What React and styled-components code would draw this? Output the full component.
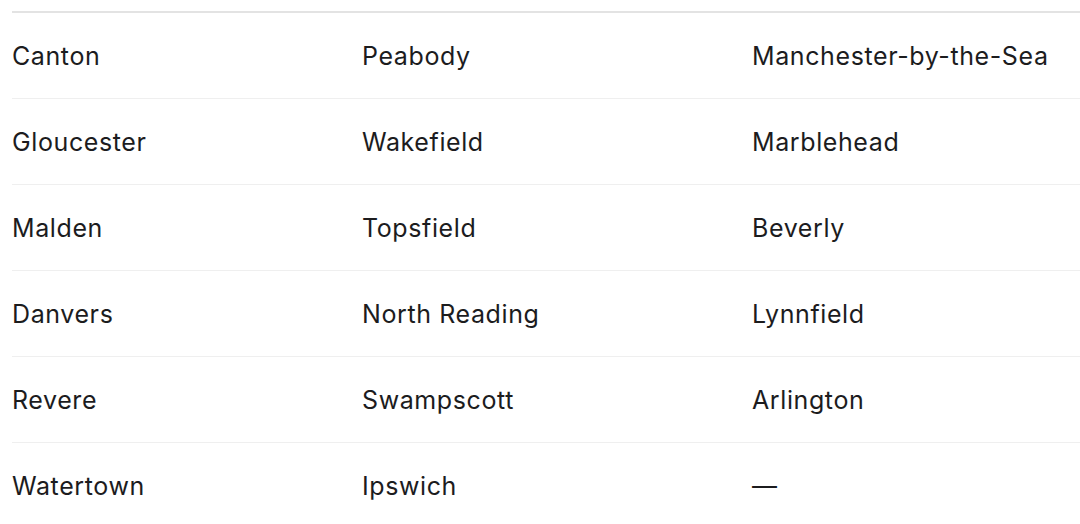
import React from "react";
import styled, { createGlobalStyle } from "styled-components";

const GlobalStyle = createGlobalStyle`
  body {
    margin: 0;
    background: #ffffff;
    font-family: Inter, "Noto Sans", sans-serif;
    -webkit-font-smoothing: antialiased;
  }
`;

const Wrapper = styled.div`
  padding: 11px 0 0 12px;
  overflow: hidden;
`;

const Table = styled.div`
  border-top: 2px solid #e3e3e3;
  width: 1200px;
`;

const Row = styled.div`
  display: grid;
  grid-template-columns: 350px 390px 1fr;
  align-items: center;
  height: 85px;
  border-bottom: 1px solid ${(p) => (p.$last ? "transparent" : "#efefef")};
`;

const Cell = styled.div`
  font-size: 25px;
  color: #1c1c1e;
  letter-spacing: 0.6px;
  white-space: nowrap;
`;

const rows = [
  ["Canton", "Peabody", "Manchester-by-the-Sea"],
  ["Gloucester", "Wakefield", "Marblehead"],
  ["Malden", "Topsfield", "Beverly"],
  ["Danvers", "North Reading", "Lynnfield"],
  ["Revere", "Swampscott", "Arlington"],
  ["Watertown", "Ipswich", "—"],
];

const App = () => {
  return (
    <>
      <GlobalStyle />
      <Wrapper>
        <Table>
          {rows.map((r, i) => (
            <Row key={i} $last={i === rows.length - 1}>
              {r.map((c, j) => (
                <Cell key={j}>{c}</Cell>
              ))}
            </Row>
          ))}
        </Table>
      </Wrapper>
    </>
  );
};

export default App;
